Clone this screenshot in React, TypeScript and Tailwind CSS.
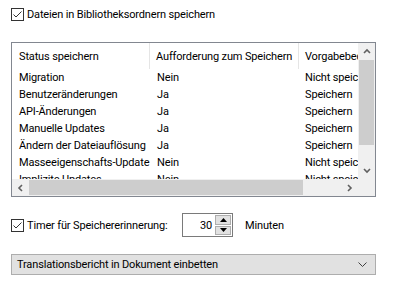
import React from "react";

const rows: [string, string, string][] = [
  ["Migration", "Nein", "Nicht speichern"],
  ["Benutzeränderungen", "Ja", "Speichern"],
  ["API-Änderungen", "Ja", "Speichern"],
  ["Manuelle Updates", "Ja", "Speichern"],
  ["Ändern der Dateiauflösung", "Ja", "Speichern"],
  ["Masseeigenschafts-Update", "Nein", "Nicht speichern"],
  ["Implizite Updates", "Nein", "Nicht speichern"],
];

function Check() {
  return (
    <div className="w-[13px] h-[13px] border border-[#333333] bg-white flex items-center justify-center shrink-0">
      <svg width="11" height="11" viewBox="0 0 11 11">
        <path d="M1.5 5.5 L4 8 L9.5 2.5" fill="none" stroke="#333333" strokeWidth="1" />
      </svg>
    </div>
  );
}

function Chevron({ dir }: { dir: "up" | "down" | "left" | "right" }) {
  const d = {
    up: "M1 5 L4 2 L7 5",
    down: "M1 2 L4 5 L7 2",
    left: "M5 1 L2 4 L5 7",
    right: "M2 1 L5 4 L2 7",
  }[dir];
  return (
    <svg width="8" height="8" viewBox="0 0 8 8">
      <path d={d} fill="none" stroke="#606060" strokeWidth="1.6" />
    </svg>
  );
}

export default function App() {
  return (
    <div
      className="w-[412px] h-[287px] bg-white text-black text-[11px] leading-[15px] tracking-[-0.15px] flex flex-col"
      style={{ fontFamily: 'Roboto, "Liberation Sans", Arial, sans-serif' }}
    >
      <div className="flex items-center ml-[11px] mt-[8px] h-[13px]">
        <Check />
        <span className="ml-[3px] whitespace-nowrap">Dateien in Bibliotheksordnern speichern</span>
      </div>

      <div className="ml-[11px] mt-[21px] w-[365px] h-[155px] border border-[#828790] flex flex-col">
        <div className="flex h-[136px]">
          <div className="w-[346px] overflow-hidden flex flex-col">
            <div className="flex h-[26px] items-center shrink-0">
              <div className="w-[138px] pl-[7px] h-full flex items-center border-r border-[#e5e5e5] whitespace-nowrap">
                Status speichern
              </div>
              <div className="w-[149px] pl-[6px] h-full flex items-center border-r border-[#e5e5e5] whitespace-nowrap overflow-hidden">
                Aufforderung zum Speichern
              </div>
              <div className="w-[59px] pl-[6px] h-full flex items-center whitespace-nowrap overflow-hidden">
                Vorgabebedingung
              </div>
            </div>
            {rows.map((r) => (
              <div key={r[0]} className="flex h-[17px] items-center shrink-0 whitespace-nowrap">
                <div className="w-[138px] pl-[7px] overflow-hidden">{r[0]}</div>
                <div className="w-[149px] pl-[7px] overflow-hidden">{r[1]}</div>
                <div className="w-[59px] pl-[6px] overflow-hidden">{r[2]}</div>
              </div>
            ))}
          </div>
          <div className="w-[17px] bg-[#f0f0f0] flex flex-col">
            <div className="h-[17px] flex items-center justify-center">
              <Chevron dir="up" />
            </div>
            <div className="flex-1 flex flex-col">
              <div className="h-[85px] mx-[1px] bg-[#cdcdcd]" />
            </div>
            <div className="h-[17px] flex items-center justify-center">
              <Chevron dir="down" />
            </div>
          </div>
        </div>
        <div className="flex h-[17px]">
          <div className="w-[346px] bg-[#f0f0f0] flex">
            <div className="w-[17px] flex items-center justify-center">
              <Chevron dir="left" />
            </div>
            <div className="flex-1 flex flex-col justify-center">
              <div className="w-[274px] h-[15px] bg-[#cdcdcd]" />
            </div>
            <div className="w-[17px] flex items-center justify-center">
              <Chevron dir="right" />
            </div>
          </div>
          <div className="w-[17px] bg-[#f0f0f0]" />
        </div>
      </div>

      <div className="flex items-center ml-[11px] mt-[16px] h-[24px]">
        <Check />
        <span className="ml-[3px] w-[155px] whitespace-nowrap">Timer für Speichererinnerung:</span>
        <div className="w-[51px] h-[24px] border border-[#7a7a7a] flex bg-white">
          <div className="flex-1 flex items-center justify-end pr-[3px]">30</div>
          <div className="w-[17px] flex flex-col py-[1px] pr-[1px] gap-[1px]">
            <div className="flex-1 border border-[#adadad] bg-[#e1e1e1] flex items-center justify-center">
              <svg width="7" height="4" viewBox="0 0 7 4"><path d="M0 4 L3.5 0 L7 4 Z" fill="#000" /></svg>
            </div>
            <div className="flex-1 border border-[#adadad] bg-[#e1e1e1] flex items-center justify-center">
              <svg width="7" height="4" viewBox="0 0 7 4"><path d="M0 0 L3.5 4 L7 0 Z" fill="#000" /></svg>
            </div>
          </div>
        </div>
        <span className="ml-[12px]">Minuten</span>
      </div>

      <div className="ml-[11px] mt-[17px] w-[365px] h-[21px] border border-[#adadad] bg-[#e1e1e1] flex items-center justify-between pl-[5px] pr-[8px]">
        <span className="whitespace-nowrap">Translationsbericht in Dokument einbetten</span>
        <svg width="9" height="6" viewBox="0 0 9 6">
          <path d="M0.5 0.5 L4.5 4.5 L8.5 0.5" fill="none" stroke="#404040" strokeWidth="1" />
        </svg>
      </div>
    </div>
  );
}
